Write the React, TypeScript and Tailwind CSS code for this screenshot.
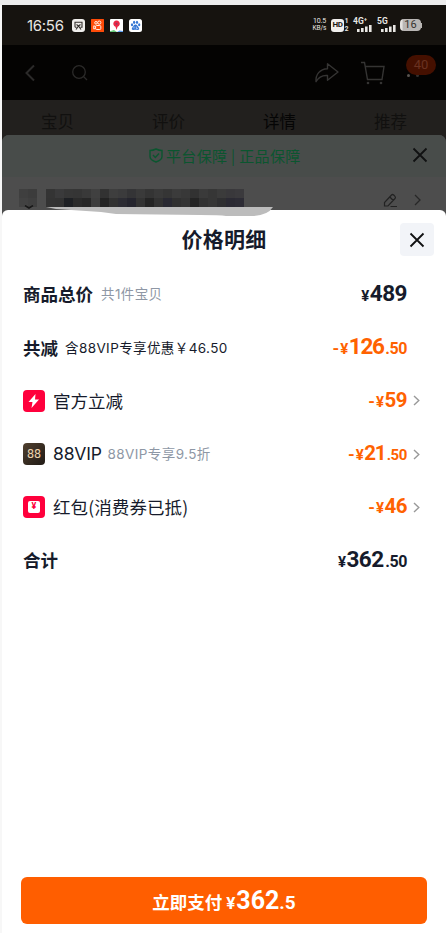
import React from "react";

const CJK = "font-['Noto_Sans_CJK_SC',sans-serif]";
const MIX = "font-['Inter','Noto_Sans_CJK_SC',sans-serif]";
const NUM = "font-['Roboto','Noto_Sans_CJK_SC',sans-serif]";

const mosaicTop = ["#3f3f3f", "#3c3c3c", "", "#343434", "#3a3a3b", "#363636", "#353535", "#393939", "#404040", "#323232", "#3e3e3e", "#3b3b3c", "#343436", "#3a3a3a", "#343434", "#393939", "#353535", "#3b3b3b", "#383838", "#323232", "#3a3a3a", "#363636", "#3b3b3b", "#39383b", "#3b3a3d"];
const mosaicBottom = ["#424242", "#3f3f3f", "", "#333333", "#323232", "#1e2024", "#2b2b2b", "#272727", "#3d3d3d", "#232323", "#313131", "#2c2c33", "#25252e", "#333333", "#242424", "#323232", "#292932", "#303030", "#343434", "#242424", "#323232", "#363636", "#2f2f31", "#2b2a33", "#2d2c35"];

function MosaicRow({ cells }: { cells: string[] }) {
  return (
    <div className="flex h-[9px]">
      {cells.map((c, i) => (
        <div key={i} className="h-[9px] w-[9px]" style={{ backgroundColor: c || "transparent" }} />
      ))}
    </div>
  );
}

function Signal() {
  return (
    <svg className="h-[7px] w-[15px]" viewBox="0 0 15 7" fill="#e8e6e3">
      <rect x="0" y="4" width="2.6" height="3" /><rect x="4" y="3" width="2.6" height="4" />
      <rect x="8" y="1.5" width="2.6" height="5.5" /><rect x="12" y="0" width="2.6" height="7" />
    </svg>
  );
}

function StatusBar() {
  return (
    <div className={`flex h-10 items-center bg-[#16130f] pl-[25px] pr-[24px] text-[#e8e6e3] ${NUM}`}>
      <span className="w-[38px] whitespace-nowrap font-['Inter'] text-[15px] leading-none tracking-[-0.3px]">16:56</span>
      <svg className="ml-[7px] h-[13px] w-[13px]" viewBox="0 0 13 13">
        <rect width="13" height="13" rx="3" fill="#f0eeec" />
        <path d="M3 8.300V3.200h7v5.100H8.500M3 8.300h1.500M4 10.500L6.500 7 9 10.500M4.500 5.500L6.500 7l2-1.500" stroke="#34302d" strokeWidth="1.1" fill="none" />
      </svg>
      <svg className="ml-[6px] h-[13px] w-[13px]" viewBox="0 0 13 13">
        <rect width="13" height="13" rx="0.5" fill="#ff4b08" />
        <g stroke="#fff1e8" fill="none"><circle cx="5" cy="3.8" r="1.3" /><circle cx="8.3" cy="3.6" r="1.6" /><rect x="4.6" y="6.5" width="5.2" height="4" rx="1" /><path d="M4.6 7.5L2.8 6.8v3.2l1.8-.7" /></g>
      </svg>
      <svg className="ml-[6px] h-[13px] w-[13px]" viewBox="0 0 13 13">
        <rect width="13" height="13" rx="1" fill="#fff" /><path d="M0 13v-.8l4-1.300L7 13z" fill="#65c878" /><path d="M7 13l2.500-1.500L13 12v1z" fill="#5d9ff0" />
        <path d="M6.5 11L5.500 7.700A3.200 3.200 0 1 1 7.600 7.700z" fill="#ec2846" /><circle cx="6.5" cy="4.7" r="1" fill="#923b62" />
      </svg>
      <svg className="ml-[6px] h-[13px] w-[13px]" viewBox="0 0 13 13">
        <rect width="13" height="13" rx="2.5" fill="#fff" />
        <g fill="#3577d4"><ellipse cx="3" cy="5.8" rx="1.1" ry="1.5" /><ellipse cx="5.1" cy="3.3" rx="1.1" ry="1.6" /><ellipse cx="8" cy="3.3" rx="1.1" ry="1.6" /><ellipse cx="10.2" cy="5.8" rx="1.1" ry="1.5" /><path d="M6.5 5.6c1.7 0 2.1 1.8 3.2 2.8 1.2 1.5.2 2.7-1.2 2.5-1.3-.2-2.7-.2-4 0-1.4.2-2.4-1-1.2-2.5 1.1-1 1.5-2.8 3.2-2.8z" /></g>
        <path d="M5 7.5v2M7.3 7.5v2h1.5" stroke="#dceaff" strokeWidth=".7" fill="none" />
      </svg>
      <div className="ml-auto flex items-center">
        <div className="w-[15px] whitespace-nowrap text-center text-[7px] leading-[7px] tracking-[-0.1px]"><div>10.5</div><div className="text-[6.5px]">KB/s</div></div>
        <div className="ml-[4px] flex h-[13px] w-[13px] items-center justify-center rounded-[3px] bg-[#f1efed] text-[8px] font-bold tracking-[-0.4px] text-[#1d1a16]">HD</div>
        <div className="w-[5px] text-center text-[6.500px] font-bold leading-[8px]"><div>1</div><div>2</div></div>
        <div className="ml-[4px] flex w-[19px] flex-col items-end"><span className="w-full whitespace-nowrap text-[8.500px] font-bold leading-[7px]">4G⁺</span><Signal /></div>
        <div className="ml-[5px] flex w-[19px] flex-col items-end"><span className="w-full text-[8.500px] font-bold leading-[7px]">5G</span><Signal /></div>
        <div className="ml-1 flex h-[12px] w-[21px] items-center justify-center rounded-[4px] bg-gradient-to-r from-[#e4e2e0] from-10% to-[#b9b6b4] to-15% text-[11px] text-[#37332f]">16</div>
        <div className="h-[5px] w-px bg-[#b9b6b4]" />
      </div>
    </div>
  );
}

function NavBar() {
  return (
    <div className="flex h-[55px] items-center bg-[#040302] pl-[22px] text-[#2b2a29]">
      <svg className="h-[18px] w-[12px]" viewBox="0 0 12 18" fill="none" stroke="currentColor" strokeWidth="2"><path d="M10 1.5L2.500 9l7.500 7.500" /></svg>
      <svg className="ml-[35px] h-[18px] w-[18px]" viewBox="0 0 18 18" fill="none" stroke="currentColor" strokeWidth="1.3"><circle cx="8" cy="8" r="6.3" /><path d="M12.500 12.500L16 16" /></svg>
      <svg className="ml-auto h-[22px] w-[26px]" viewBox="0 0 26 22" fill="none" stroke="#353433" strokeWidth="1.4" strokeLinejoin="round"><path d="M13.500 1.800L24 10l-10.500 8.200v-4.700C8 13 4.800 14.600 2 19.700 1.500 12.500 5.700 7 13.500 6.700z" /></svg>
      <svg className="ml-[20px] h-[25px] w-[27px]" viewBox="0 0 27 25" fill="none" stroke="#353433" strokeWidth="1.4"><path d="M1 2.500h3.500L7.500 19.500h14.500L24 6.500H5.200" /><circle cx="8" cy="23" r="1.300" fill="#353433" stroke="none" /><circle cx="21" cy="23" r="1.300" fill="#353433" stroke="none" /></svg>
      <div className="relative ml-[19px] mr-[8px] h-[36px] w-[32px]">
        <div className="absolute left-[1px] top-[19px] h-[3px] w-[3px] rounded-full bg-[#595450]" />
        <div className="absolute left-[10px] top-[19px] h-[3px] w-[3px] rounded-full bg-[#35302d]" />
        <div className="absolute left-0 top-0 flex h-[20px] w-[30px] items-center justify-center rounded-full bg-[#451000] font-['Roboto'] text-[13px] text-[#6a3220]">40</div>
      </div>
    </div>
  );
}

function Close({ className = "" }: { className?: string }) {
  return <svg className={`h-[16px] w-[16px] ${className}`} viewBox="0 0 16 16" fill="none" stroke="#101112" strokeWidth="1.8"><path d="M1.500 1.500l13 13M14.500 1.500l-13 13" /></svg>;
}

function Chevron() {
  return <svg className="h-[11px] w-[7px]" viewBox="0 0 7 11" fill="none" stroke="#999" strokeWidth="1.4"><path d="M1 1l4.800 4.500L1 10" /></svg>;
}

function BackgroundSheet() {
  return (
    <div className="bg-[#22201e]">
      <div className="h-[75px] overflow-hidden rounded-t-[7px] bg-[#4d4d4d]">
        <div className="flex h-[42px] items-center bg-[#484c4a] pb-[2px] pl-[147px] pr-[18px]">
          <svg className="h-[15px] w-[14px]" viewBox="0 0 14 15" fill="none" stroke="#0b552f" strokeWidth="1.400"><path d="M1 2.500Q4 2.500 7 1q3 1.500 6 1.500v6c0 3-3 4.500-6 5.500-3-1-6-2.500-6-5.500z" /><path d="M4 7l2.300 2.500L10 5.500" /></svg>
          <span className="ml-[3px] whitespace-nowrap text-[15px] leading-none tracking-[0.35px] text-[#0b552f]">平台保障 | 正品保障</span>
          <Close className="ml-auto" />
        </div>
        <div className="flex h-[33px] pl-[17px] pr-[25px] pt-[12px]">
          <div className="relative">
            <MosaicRow cells={mosaicTop} /><MosaicRow cells={mosaicBottom} />
            <svg className="absolute left-[5px] top-[16px] h-[4px] w-[10px]" viewBox="0 0 10 4" fill="none" stroke="#181818" strokeWidth="1.500"><path d="M1 .5l4 2.500L9 .5" /></svg>
          </div>
          <svg className="ml-auto mt-[4px] h-[15px] w-[14px]" viewBox="0 0 14 15" fill="none" stroke="#222" strokeWidth="1.200"><path d="M1.500 13V9.500L8.500 2q1-1 2.200 0l1.300 1.300q1 1 0 2.200L5 13zM6.800 4l3.500 3.500M7.500 13.500H14" /></svg>
          <svg className="ml-[17px] mt-[5px] h-[12px] w-[7px]" viewBox="0 0 7 12" fill="none" stroke="#272727" strokeWidth="1.300"><path d="M1 1l5 5-5 5" /></svg>
        </div>
      </div>
    </div>
  );
}

function Price({ minus = false, small = false, narrow = false, whole, cents = "" }: { minus?: boolean; small?: boolean; narrow?: boolean; whole: string; cents?: string }) {
  return (
    <span className={`flex items-baseline whitespace-nowrap font-bold leading-none ${NUM}`}>
      {minus && <span className="mr-[1px] text-[17px]">-</span>}
      <span className="mr-[0.5px] text-[15px]">¥</span>
      <span className={`${small ? "text-[20.500px]" : "text-[22.500px]"} ${narrow ? "tracking-[-1.3px]" : "tracking-[-0.5px]"}`}>{whole}</span>
      {cents && <span className={`ml-[1.500px] tracking-[-0.4px] ${small ? "text-[15px]" : "text-[16px]"}`}>{cents}</span>}
    </span>
  );
}

function Row({ children, price, link = false, tone = "text-[#ff6200]" }: { children: React.ReactNode; price: React.ReactNode; link?: boolean; tone?: string }) {
  return (
    <div className="flex h-[53.2px] items-center pl-[21px] pr-[26px]">
      <div className="flex items-center whitespace-nowrap text-[#161b2b]">{children}</div>
      <div className={`ml-auto mr-[6px] pb-[2px] ${tone}`}>{price}</div>
      <div className="w-[7px]">{link && <Chevron />}</div>
    </div>
  );
}

export default function App() {
  return (
    <div className={`h-[933px] w-[446px] overflow-hidden bg-[#f7f7f7] pl-[2px] ${CJK}`}>
      <div className="-ml-[2px] h-[5px] bg-[#ededed]" />
      <StatusBar />
      <NavBar />
      <div className="flex h-[35px] items-center bg-[#22201e] pt-[8px] text-[16.500px] leading-none text-[#11100f]">
        <span className="w-[111px] text-center">宝贝</span><span className="w-[111px] text-center">评价</span>
        <span className="w-[111px] text-center text-[#050505]">详情</span><span className="w-[111px] text-center">推荐</span>
      </div>
      <BackgroundSheet />
      <div className="bg-[#4d4d4d]">
        <div className="relative flex h-[723px] flex-col rounded-t-[6px] bg-white">
          <svg className="absolute left-[44px] top-[-3px] h-[9px] w-[227px]" viewBox="0 0 227 9" fill="#bcbcbc"><path d="M0 0H227Q222 8 208 9H180Q174 8 154 8L70 7 55 5 10 2z" /></svg>
          <div className="relative flex h-[57.9px] items-center justify-center">
            <h1 className="pb-px text-[21px] font-bold leading-none tracking-[0.2px] text-[#161b2b]">价格明细</h1>
            <button className="absolute right-[12px] top-[13px] flex h-[33px] w-[34px] items-center justify-center rounded-[4px] bg-[#f2f4f8]"><Close /></button>
          </div>
          <Row tone="text-[#161b2b]" price={<Price whole="489" />}>
            <span className="text-[17.500px] font-bold">商品总价</span><span className={`ml-[8px] text-[13.500px] tracking-[0.4px] text-[#8e97a5] ${MIX}`}>共1件宝贝</span>
          </Row>
          <Row price={<Price minus narrow whole="126" cents=".50" />}>
            <span className="text-[17.500px] font-bold">共减</span><span className={`ml-[7px] text-[13.500px] tracking-[0.4px] ${MIX}`}>含88VIP专享优惠￥46.50</span>
          </Row>
          <Row link price={<Price minus small whole="59" />}>
            <svg className="h-[22px] w-[22px]" viewBox="0 0 22 22"><rect width="22" height="22" rx="4" fill="#ff003c" /><path d="M12.500 4L5.500 12h4L8.500 18l7.500-8.500h-4z" fill="#fff" /></svg>
            <span className="ml-[8px] text-[17.500px]">官方立减</span>
          </Row>
          <Row link price={<Price minus small narrow whole="21" cents=".50" />}>
            <span className="flex h-[22px] w-[22px] items-center justify-center rounded-[4px] bg-gradient-to-br from-[#51402f] to-[#211b16] font-['Roboto'] text-[12.500px] text-[#edd4ad]">88</span>
            <span className="ml-[8px] font-['Inter'] text-[17.500px] tracking-[-0.2px]">88VIP</span><span className={`ml-[6px] text-[13.500px] tracking-[0.4px] text-[#8e97a5] ${MIX}`}>88VIP专享9.5折</span>
          </Row>
          <Row link price={<Price minus small whole="46" />}>
            <span className="flex h-[22px] w-[22px] items-center justify-center rounded-[4px] bg-[#ff003c]"><span className="flex h-[12px] w-[12px] items-center justify-center rounded-[2px] bg-white font-['Roboto'] text-[9px] font-bold text-[#ff003c]">¥</span></span>
            <span className="ml-[8px] text-[17.500px] tracking-[0.1px]">红包(消费券已抵)</span>
          </Row>
          <Row tone="text-[#161b2b]" price={<Price whole="362" cents=".50" />}><span className="text-[17.500px] font-bold">合计</span></Row>
          <button className="mb-[9px] ml-[19px] mt-auto flex h-[47px] w-[406px] items-center justify-center rounded-[6px] bg-[#ff5e00] text-white">
            <span className="flex items-baseline whitespace-nowrap leading-none"><span className="mr-[4px] text-[17.500px] font-bold">立即支付</span><span className={`mr-[1px] text-[17px] font-bold ${NUM}`}>¥</span><span className={`text-[25px] font-bold ${NUM}`}>362</span><span className={`text-[19px] font-bold ${NUM}`}>.5</span></span>
          </button>
        </div>
      </div>
    </div>
  );
}
